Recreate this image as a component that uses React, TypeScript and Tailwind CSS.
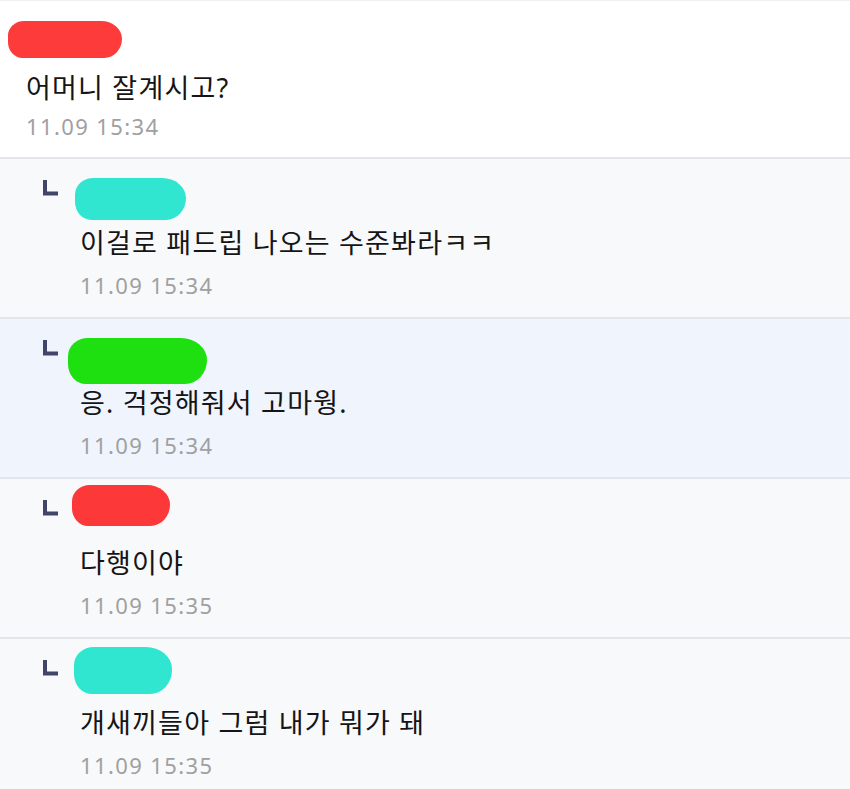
const replies = [
  { text: "이걸로 패드립 나오는 수준봐라ㅋㅋ", time: "11.09 15:34", color: "#31e6d0", blob: { left: 75, top: 19, width: 111, height: 42 }, active: false },
  { text: "응. 걱정해줘서 고마웡.", time: "11.09 15:34", color: "#1ee010", blob: { left: 68, top: 19, width: 139, height: 46 }, active: true },
  { text: "다행이야", time: "11.09 15:35", color: "#fd3838", blob: { left: 72, top: 6, width: 98, height: 41 }, active: false },
  { text: "개새끼들아 그럼 내가 뭐가 돼", time: "11.09 15:35", color: "#31e6d0", blob: { left: 74, top: 8, width: 98, height: 47 }, active: false },
];

const font = "font-['Noto_Sans','Noto_Sans_CJK_KR',sans-serif]";

function ReplyMark() {
  return (
    <svg width="16" height="16" viewBox="0 0 16 16" className="mt-[21px] ml-[43px] shrink-0">
      <path d="M2 0 V13.5 H15" fill="none" stroke="#41456a" strokeWidth="4" />
    </svg>
  );
}

// marker scribble used to hide the nicknames
function Scribble({ color, style }: { color: string; style: React.CSSProperties }) {
  return (
    <div
      className="absolute rounded-[20px_26px_22px_18px/18px_22px_24px_20px]"
      style={{ background: color, ...style }}
    />
  );
}

export default function App() {
  return (
    <div className={`w-[850px] h-[789px] overflow-hidden bg-white ${font}`}>
      <div className="h-[157px] border-t border-[#eef0f3] bg-white">
        <div className="relative h-[69px]">
          <Scribble color="#fd3b3b" style={{ left: 8, top: 20, width: 114, height: 37 }} />
        </div>
        <p className="pl-[26px] text-[27px] leading-[36px] tracking-[1.2px] text-[#151515]">어머니 잘계시고?</p>
        <p className="mt-[5px] pl-[26px] text-[22px] leading-[30px] tracking-[1.4px] text-[#a0a0a0]">
          11.09 15:34
        </p>
      </div>

      {replies.map((r, i) => (
        <div
          key={i}
          className={`h-[160px] border-t-2 border-[#e3e5ea] ${r.active ? "bg-[#eff4fd]" : "bg-[#f8f9fb]"}`}
        >
          <div className="relative flex h-[66px]">
            <ReplyMark />
            <Scribble color={r.color} style={r.blob} />
          </div>
          <p className="pl-[80px] text-[27px] leading-[36px] tracking-[1.2px] text-[#151515]">{r.text}</p>
          <p className="mt-[9px] pl-[80px] text-[22px] leading-[30px] tracking-[1.4px] text-[#a0a0a0]">
            {r.time}
          </p>
        </div>
      ))}
    </div>
  );
}
